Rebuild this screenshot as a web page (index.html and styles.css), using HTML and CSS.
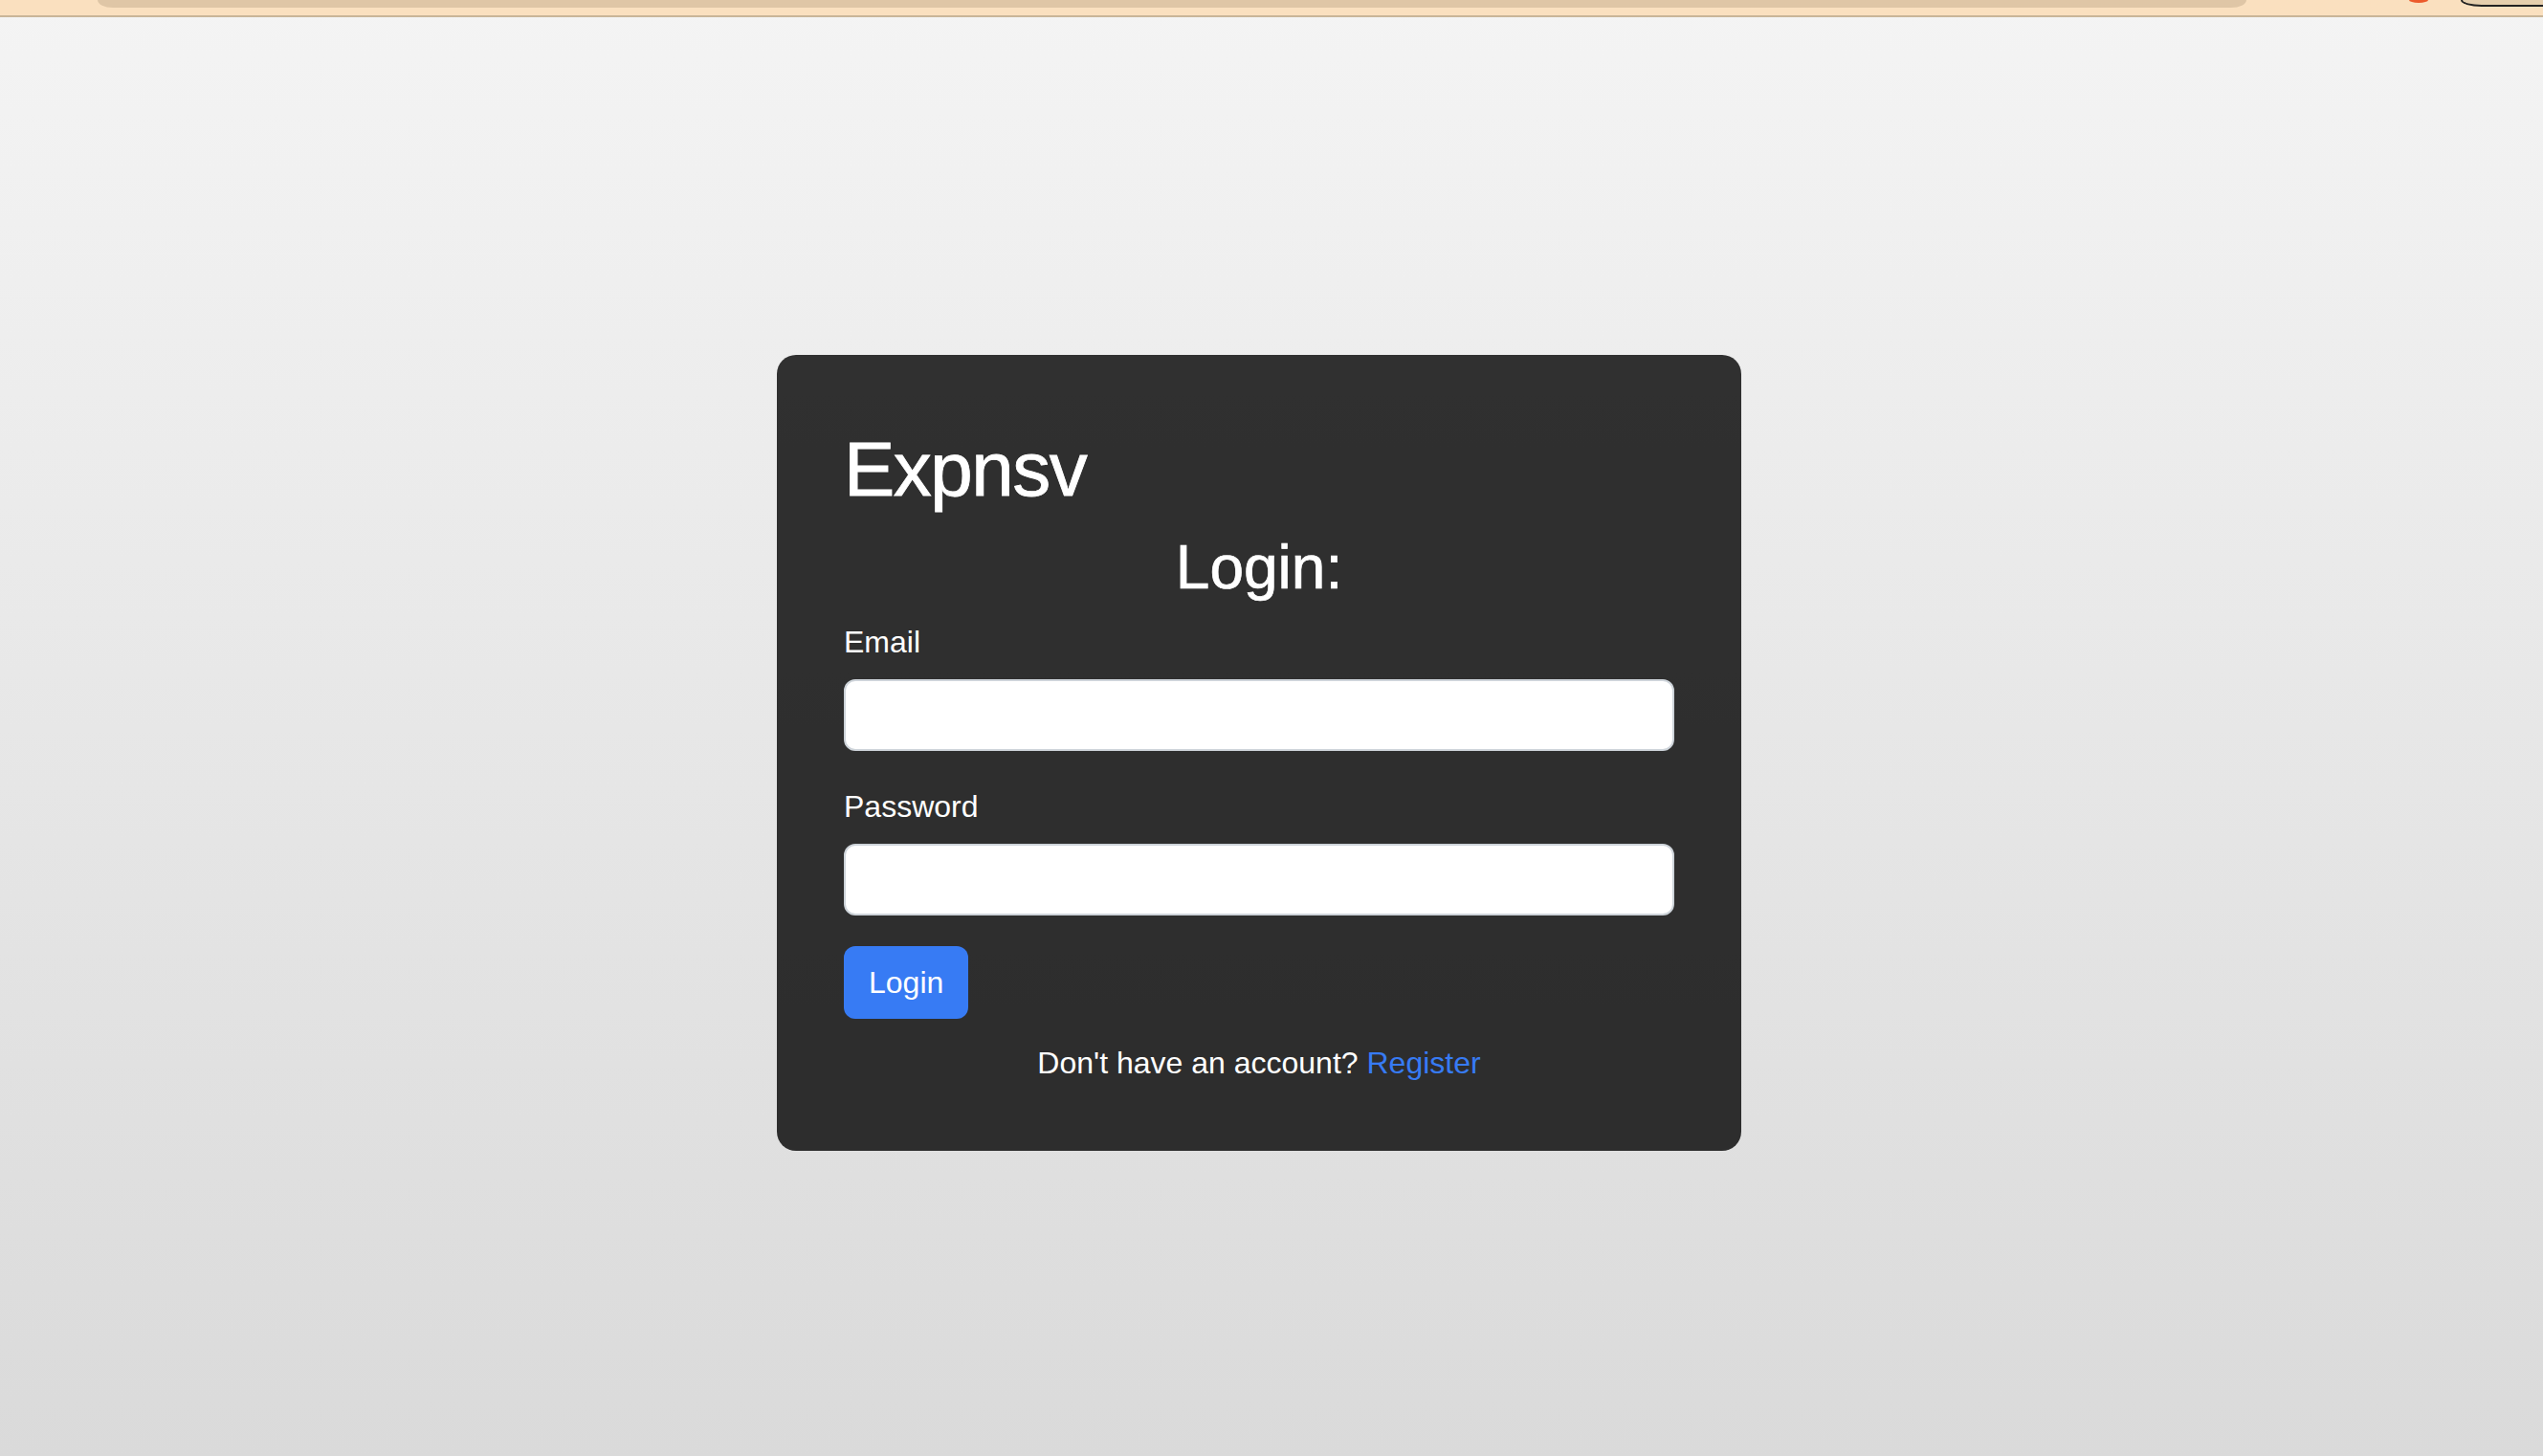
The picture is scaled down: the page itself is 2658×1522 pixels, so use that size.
FILE: index.html
```html
<!DOCTYPE html>
<html lang="en">
<head>
<meta charset="utf-8">
<title>Expnsv - Login</title>
<link rel="stylesheet" href="styles.css">
</head>
<body>
  <div class="topbar">
    <div class="topbar-tab"></div>
    <div class="topbar-dot"></div>
    <div class="topbar-pill"></div>
  </div>
  <main class="page">
    <section class="card">
      <h1 class="brand">Expnsv</h1>
      <h2 class="title">Login:</h2>
      <form class="form">
        <div class="field">
          <label class="field-label" for="email">Email</label>
          <input class="field-input" type="email" id="email">
        </div>
        <div class="field field-last">
          <label class="field-label" for="password">Password</label>
          <input class="field-input" type="password" id="password">
        </div>
        <button class="btn" type="button">Login</button>
      </form>
      <p class="signup">Don't have an account? <a class="signup-link" href="#">Register</a></p>
    </section>
  </main>
</body>
</html>
```
FILE: styles.css
```css
html, body {
  margin: 0;
  padding: 0;
}

body {
  min-height: 1522px;
  background: linear-gradient(180deg, #f4f4f4 0%, #dadada 100%);
  font-family: "Liberation Sans", Arial, sans-serif;
  color: #fff;
  overflow: hidden;
}

.topbar {
  height: 16px;
  background: #fae0bf;
  border-bottom: 2px solid #c9b598;
  display: flex;
  align-items: flex-start;
  overflow: hidden;
}

.topbar-tab {
  flex-shrink: 0;
  margin-left: 102px;
  width: 2246px;
  height: 8px;
  background: #dfc6a6;
  border-radius: 0 0 16px 16px / 0 0 8px 8px;
}

.topbar-dot {
  flex-shrink: 0;
  margin-left: 170px;
  width: 20px;
  height: 3px;
  background: #ec5a2c;
  border-radius: 0 0 10px 10px / 0 0 3px 3px;
}

.topbar-pill {
  flex-shrink: 0;
  margin-left: 34px;
  width: 100px;
  height: 5px;
  background: #e6cfae;
  border-left: 2px solid #222;
  border-bottom: 2px solid #222;
  border-bottom-left-radius: 22px 7px;
}

.page {
  display: flex;
  justify-content: center;
  padding: 353px 26px 0 0;
}

.card {
  box-sizing: border-box;
  width: 1008px;
  padding: 72px 70px 68px;
  background: rgba(0, 0, 0, 0.8);
  border-radius: 20px;
}

.brand {
  margin: 0 0 16px;
  font-size: 80px;
  line-height: 1.2;
  font-weight: 400;
  letter-spacing: -1.5px;
  -webkit-text-stroke: 0.8px #fff;
}

.title {
  margin: 0 0 15px;
  font-size: 64px;
  line-height: 1.2;
  font-weight: 400;
  text-align: center;
  -webkit-text-stroke: 0.7px #fff;
}

.form {
  margin: 0;
}

.field {
  margin-bottom: 34px;
}

.field-last {
  margin-bottom: 32px;
}

.field-label {
  display: block;
  font-size: 32px;
  line-height: 48px;
  margin-bottom: 15px;
}

.field-input {
  display: block;
  box-sizing: border-box;
  width: 100%;
  height: 75px;
  margin: 0;
  padding: 0 24px;
  background: #fff;
  border: 2px solid #ced4da;
  border-radius: 12px;
  font-family: inherit;
  font-size: 32px;
  outline: none;
}

.btn {
  display: block;
  box-sizing: border-box;
  height: 76px;
  padding: 0 26px;
  margin: 0;
  background: #377bf4;
  color: #fff;
  border: 0;
  border-radius: 12px;
  font-family: inherit;
  font-size: 32px;
  line-height: 48px;
}

.signup {
  margin: 22px 0 0;
  font-size: 32px;
  line-height: 48px;
  text-align: center;
}

.signup-link {
  color: #377bf4;
  text-decoration: none;
}
```
